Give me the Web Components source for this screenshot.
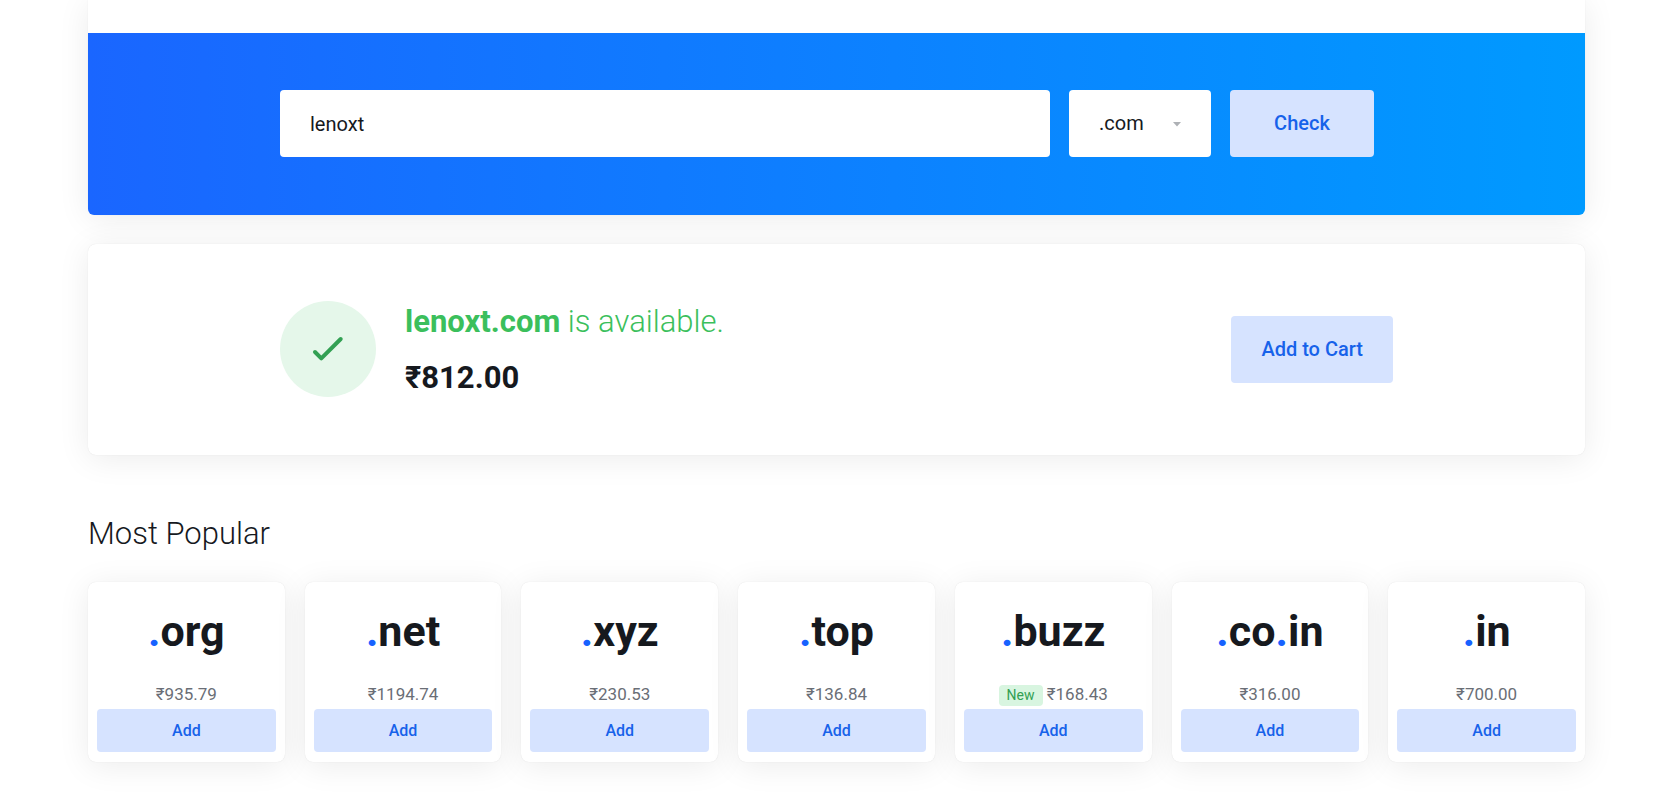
<!DOCTYPE html>
<html lang="en">
<head>
<meta charset="utf-8">
<meta name="viewport" content="width=device-width, initial-scale=1">
<title>Domain search</title>
<style>
  body {
    margin: 0;
    background: #fff;
    color: #16191e;
    font-family: Roboto, "Noto Sans", sans-serif;
    --accent: #1762ea;
    --accent-soft: #d6e3ff;
    --shadow: 0 0 1px rgba(0, 0, 0, .12), 0 4px 32px rgba(0, 0, 0, .08);
  }
</style>
</head>
<body>
<domain-page>
  <search-panel></search-panel>
  <result-panel>
    <strong slot="domain">lenoxt.com</strong>
    <span slot="status">is available.</span>
    <span slot="price">₹812.00</span>
  </result-panel>
  <popular-list heading="Most Popular">
    <tld-card name=".org">₹935.79</tld-card>
    <tld-card name=".net">₹1194.74</tld-card>
    <tld-card name=".xyz">₹230.53</tld-card>
    <tld-card name=".top">₹136.84</tld-card>
    <tld-card name=".buzz"><new-badge>New</new-badge> ₹168.43</tld-card>
    <tld-card name=".co.in">₹316.00</tld-card>
    <tld-card name=".in">₹700.00</tld-card>
  </popular-list>
</domain-page>

<script>
  const define = (name, markup, setup) => {
    customElements.define(name, class extends HTMLElement {
      constructor() {
        super();
        this.attachShadow({ mode: 'open' }).innerHTML = markup;
      }
      connectedCallback() {
        if (setup) setup(this, this.shadowRoot);
      }
    });
  };

  define('domain-page', `
    <style>
      :host { display: block; padding: 0 81px 43px 88px; }
      main { display: flex; flex-direction: column; }
    </style>
    <main><slot></slot></main>
  `);

  define('soft-button', `
    <style>
      :host { display: block; }
      button {
        display: block; width: 100%; height: 67px; padding: 0 30px 1px;
        border: 0; border-radius: 4px; background: var(--accent-soft);
        color: var(--accent); font: 500 20px/24px Roboto, sans-serif;
        white-space: nowrap; cursor: pointer;
      }
      :host([size="small"]) button { height: 43px; padding: 0 8px; font-size: 16px; }
      button:hover { background: #c6d8ff; }
    </style>
    <button type="button"><slot></slot></button>
  `);

  define('search-panel', `
    <style>
      :host {
        display: block; border-radius: 0 0 8px 8px;
        background: #fff; box-shadow: var(--shadow);
      }
      .intro { height: 33px; }
      form {
        display: grid; grid-template-columns: 1fr 142px 144px; column-gap: 19px;
        padding: 57px 211px 58px 192px; border-radius: 0 0 6px 6px;
        background: linear-gradient(to right, #1a66ff, #009aff);
      }
      input, select {
        box-sizing: border-box; width: 100%; height: 67px; margin: 0;
        border: 0; border-radius: 4px; padding: 0 30px; background: #fff;
        color: #16191e; font: 400 20px/24px Roboto, sans-serif;
        appearance: none;
      }
      select { padding-bottom: 2px; }
      .pick { position: relative; }
      .pick svg { position: absolute; right: 30px; top: 32px; pointer-events: none; }
    </style>
    <div class="intro"></div>
    <form>
      <input type="text" value="lenoxt" aria-label="Domain name">
      <div class="pick">
        <select aria-label="Extension">
          <option>.com</option><option>.org</option><option>.net</option>
        </select>
        <svg width="8" height="5" viewBox="0 0 8 5" aria-hidden="true"><path d="M0 0h8L4 4.5z" fill="#aeb1b5"/></svg>
      </div>
      <soft-button>Check</soft-button>
    </form>
  `);

  define('result-panel', `
    <style>
      :host {
        display: flex; align-items: center; gap: 29px;
        margin-top: 29px; padding: 56px 192px 57px;
        border-radius: 8px; background: #fff; box-shadow: var(--shadow);
      }
      ::slotted(strong) { font-weight: 700; }
      .mark {
        display: grid; place-items: center; flex: none;
        width: 96px; height: 96px; border-radius: 50%; background: #e5f7ea;
      }
      .text { flex: 1; padding-top: 2px; font-size: 31px; line-height: 40px; }
      h2 { margin: 0 0 16px; font: inherit; font-weight: 300; color: #3bbf5c; }
      p { margin: 0; font-weight: 700; }
    </style>
    <div class="mark">
      <svg width="32" height="26" viewBox="0 0 32 26" fill="none" stroke="#32a053" stroke-width="4" stroke-linecap="round" stroke-linejoin="round" aria-hidden="true"><path d="M3 16L9.300 22.300L28.700 3"/></svg>
    </div>
    <div class="text">
      <h2><slot name="domain"></slot> <slot name="status"></slot></h2>
      <p><slot name="price"></slot></p>
    </div>
    <soft-button>Add to Cart</soft-button>
  `);

  define('popular-list', `
    <style>
      :host { display: block; margin-top: 59px; }
      h2 { margin: 0 0 28px; font-size: 31px; line-height: 40px; font-weight: 300; }
      .grid { display: grid; grid-template-columns: repeat(7, 1fr); gap: 20px; }
    </style>
    <h2></h2>
    <div class="grid"><slot></slot></div>
  `, (host, root) => {
    root.querySelector('h2').textContent = host.getAttribute('heading');
  });

  define('new-badge', `
    <style>
      :host {
        display: inline-block; padding: 0 8px; border-radius: 4px;
        background: #d8f5e0; color: #32a053; font-size: 14px; line-height: 21px;
      }
    </style>
    <slot></slot>
  `);

  define('tld-card', `
    <style>
      :host {
        display: flex; flex-direction: column; padding: 23px 9px 10px;
        border-radius: 8px; background: #fff; box-shadow: var(--shadow);
        text-align: center;
      }
      h3 { margin: 0 0 25px; font-size: 43px; line-height: 52px; font-weight: 700; }
      i { font-style: normal; color: #1762ff; }
      p { height: 27px; margin: 0; font-size: 17px; line-height: 24px; color: #6a6e76; }
    </style>
    <h3></h3>
    <p><slot></slot></p>
    <soft-button size="small">Add</soft-button>
  `, (host, root) => {
    root.querySelector('h3').innerHTML = host.getAttribute('name').replaceAll('.', '<i>.</i>');
  });
</script>
</body>
</html>
